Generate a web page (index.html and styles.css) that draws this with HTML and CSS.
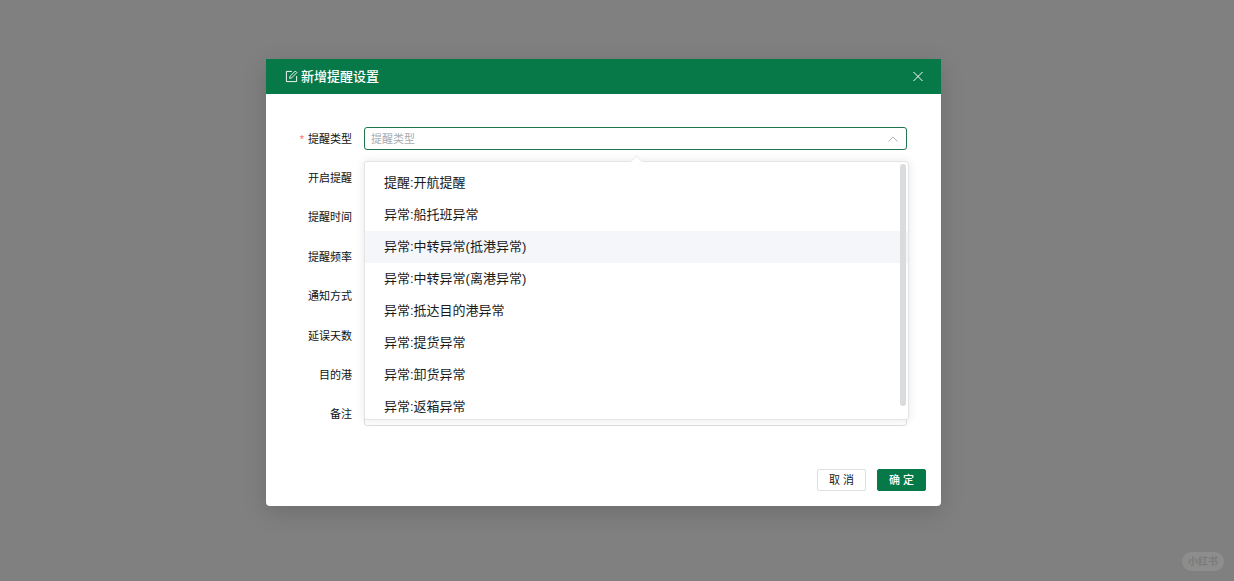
FILE: index.html
```
<!DOCTYPE html>
<html lang="zh-CN">
<head>
<meta charset="utf-8">
<title>新增提醒设置</title>
<link rel="stylesheet" href="styles.css">
</head>
<body>
<main class="overlay">
  <section class="dialog" role="dialog" aria-labelledby="dialog-title">
    <header class="dialog-header">
      <svg class="edit-icon" viewBox="0 0 14 14" aria-hidden="true"><path d="M7.500 1.500H1.500v11h11V6.500"/><path d="M5 9l.5-2.300 5.600-5.600 1.700 1.700-5.600 5.600z"/></svg>
      <h1 class="dialog-title" id="dialog-title">新增提醒设置</h1>
      <button class="close" type="button" aria-label="关闭"><svg viewBox="0 0 12 12" aria-hidden="true"><path d="M1.500 1l9 9M10.500 1l-9 9"/></svg></button>
    </header>
    <form class="form">
      <div class="row">
        <label class="label required" for="type">提醒类型</label>
        <div class="field">
          <select class="control select" id="type"><option>提醒类型</option></select>
          <svg class="arrow" viewBox="0 0 12 12" aria-hidden="true"><path d="M1.500 8.500L6 4l4.500 4.500"/></svg>
          <div class="dropdown">
            <ul class="options" role="listbox" aria-label="提醒类型">
              <li class="option" role="option">提醒:开航提醒</li>
              <li class="option" role="option">异常:船托班异常</li>
              <li class="option active" role="option">异常:中转异常(抵港异常)</li>
              <li class="option" role="option">异常:中转异常(离港异常)</li>
              <li class="option" role="option">异常:抵达目的港异常</li>
              <li class="option" role="option">异常:提货异常</li>
              <li class="option" role="option">异常:卸货异常</li>
              <li class="option" role="option">异常:返箱异常</li>
            </ul>
            <span class="thumb"></span>
          </div>
        </div>
      </div>
      <div class="row"><label class="label" for="enabled">开启提醒</label><div class="field"><input type="checkbox" id="enabled"></div></div>
      <div class="row"><label class="label" for="time">提醒时间</label><div class="field"><input class="control" id="time"></div></div>
      <div class="row"><label class="label" for="rate">提醒频率</label><div class="field"><input class="control" id="rate"></div></div>
      <div class="row"><label class="label" for="notify">通知方式</label><div class="field"><input class="control" id="notify"></div></div>
      <div class="row"><label class="label" for="days">延误天数</label><div class="field"><input class="control" id="days"></div></div>
      <div class="row"><label class="label" for="port">目的港</label><div class="field"><input class="control" id="port"></div></div>
      <div class="row"><label class="label" for="remark">备注</label><div class="field"><textarea class="control remark" id="remark" rows="1"></textarea></div></div>
    </form>
    <footer class="actions">
      <button class="button" type="button">取 消</button>
      <button class="button primary" type="button">确 定</button>
    </footer>
  </section>
  <span class="watermark">小红书</span>
</main>
</body>
</html>
```
FILE: styles.css
```
* { box-sizing: border-box; }
body {
  margin: 0;
  background: #808080;
  color: #1a1a1a;
  font-family: "Liberation Sans", "Noto Sans CJK SC", sans-serif;
  font-size: 11px;
}
button, input, select, textarea { font: inherit; color: inherit; margin: 0; }
.overlay {
  position: relative;
  display: flex;
  justify-content: center;
  align-items: flex-start;
  min-height: 100vh;
  padding: 59px 27px 0 0;
}
.dialog {
  width: 100%;
  max-width: 675px;
  background: #fff;
  border-radius: 4px;
  box-shadow: 0 6px 24px rgba(0, 0, 0, .16);
}
.dialog-header {
  display: flex;
  align-items: center;
  gap: 3px;
  height: 35px;
  padding: 0 17px 0 19px;
  background: #077848;
  color: #fff;
}
.edit-icon { width: 13px; height: 13px; }
svg { display: block; fill: none; stroke: currentColor; }
.dialog-title { margin: 0; flex: 1; font-size: 13px; line-height: 18px; font-weight: 500; }
.close {
  display: flex;
  padding: 0;
  border: 0;
  background: none;
  color: #fff;
}
.close svg { width: 12px; height: 12px; }
.form {
  display: grid;
  grid-auto-rows: 1fr;
  min-height: 315px;
  margin-top: 25px;
  padding: 0 34px 0 24px;
}
.row {
  display: grid;
  grid-template-columns: 62px 1fr;
  column-gap: 12px;
  align-items: center;
}
.label { text-align: right; line-height: 16px; white-space: nowrap; color: #111; }
.required::before { content: "*"; margin-right: 4px; color: #f56c6c; }
.field { position: relative; display: flex; align-items: center; }
.control {
  width: 100%;
  height: 23px;
  padding: 0 6px;
  border: 1px solid #dcdfe0;
  border-radius: 3px;
  background: #fff;
  outline: 0;
}
.select { appearance: none; border-color: #20754f; color: #a8abb0; }
.remark { display: block; resize: none; }
.arrow { position: absolute; right: 8px; width: 12px; height: 12px; color: #b0b3b8; pointer-events: none; }
.dropdown {
  position: absolute;
  z-index: 2;
  top: 34px;
  left: 0;
  right: -2px;
  border: 1px solid #e2e4e6;
  border-radius: 3px;
  background: #fff;
  box-shadow: 0 0 10px rgba(0, 0, 0, .1);
}
.dropdown::before {
  content: "";
  position: absolute;
  top: -5px;
  left: 50%;
  width: 8px;
  height: 8px;
  margin-left: -5px;
  border: solid #e8e9eb;
  border-width: 1px 0 0 1px;
  background: #fff;
  transform: rotate(45deg);
}
.options {
  position: relative;
  max-height: 257px;
  margin: 0;
  padding: 5px 0 0;
  overflow: hidden;
  list-style: none;
  background: #fff;
  border-radius: 3px;
}
.option { height: 32px; padding: 0 19px; font-size: 13px; line-height: 31px; }
.active { background: #f4f6f9; }
.thumb {
  position: absolute;
  top: 2px;
  right: 2px;
  width: 6px;
  height: 242px;
  border-radius: 3px;
  background: #dadbdc;
}
.actions {
  display: flex;
  justify-content: flex-end;
  gap: 11px;
  padding: 35px 15px 15px;
}
.button {
  min-width: 49px;
  height: 22px;
  padding: 0 10px;
  border: 1px solid #dcdfe3;
  border-radius: 2px;
  background: #fff;
  line-height: 20px;
}
.primary { border-color: #077848; background: #077848; color: #fff; font-weight: 500; }
.watermark {
  position: absolute;
  right: 10px;
  bottom: 10px;
  padding: 0 6px;
  border-radius: 10px;
  background: #8d8d8d;
  color: #7b7b7b;
  font-size: 10px;
  line-height: 19px;
  font-weight: 700;
}
```
